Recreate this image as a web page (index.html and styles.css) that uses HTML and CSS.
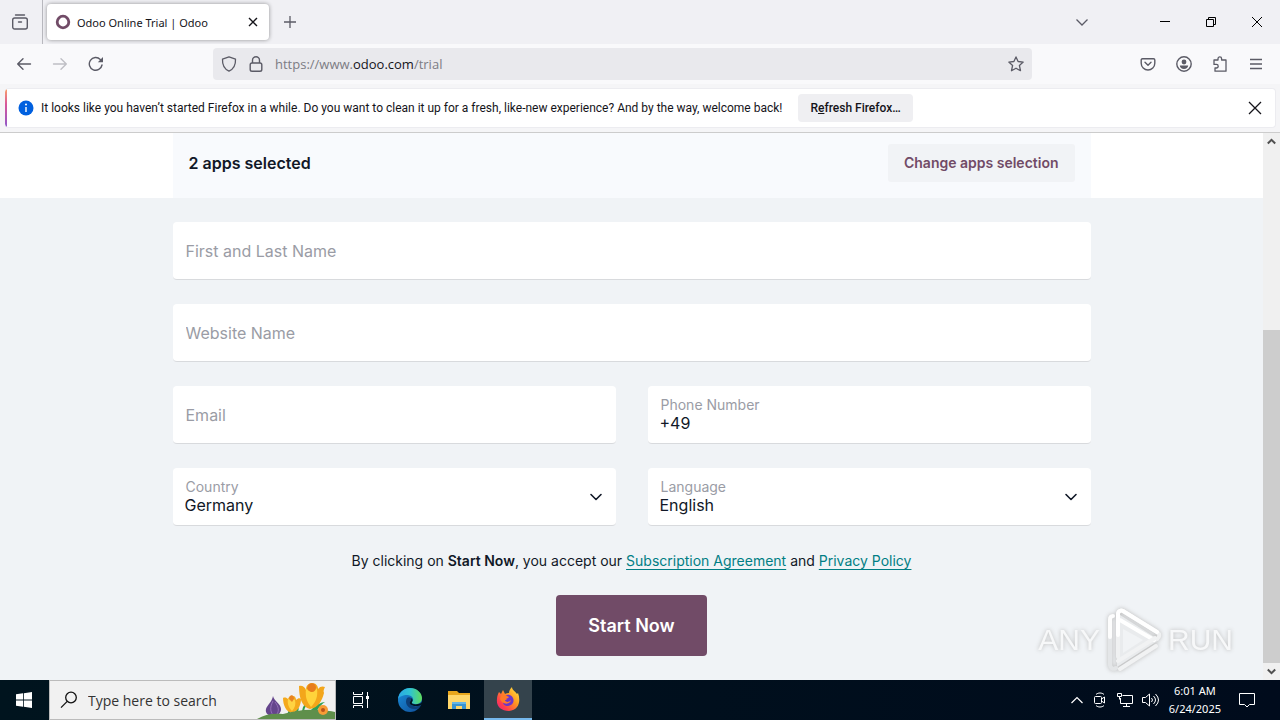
FILE: index.html
```html
<!DOCTYPE html>
<html lang="en">
<head>
  <meta charset="UTF-8">
  <meta name="viewport" content="width=device-width, initial-scale=1.0">
  <title>Odoo Online Trial | Odoo</title>
  <link rel="stylesheet" href="styles.css">
</head>
<body>
  <!-- Tabs -->
  <header class="tabbar">
    <button class="icon-btn tabview" aria-label="Firefox View">
      <svg width="18" height="18" viewBox="0 0 18 18" fill="none" stroke="#5b5b66" stroke-width="1.4" stroke-linecap="round"><path d="M4.500 2h9"/><rect x="1.700" y="5" width="14.600" height="11" rx="2"/><path d="M7.500 9h3"/></svg>
    </button>
    <div class="tab">
      <svg width="16" height="16" viewBox="0 0 16 16"><circle cx="8" cy="8" r="5.8" fill="none" stroke="#714b67" stroke-width="2.800"/></svg>
      <span class="tab-title">Odoo Online Trial | Odoo</span>
      <button class="icon-btn tab-close" aria-label="Close tab">
        <svg width="10" height="10" viewBox="0 0 10 10" stroke="#15141a" stroke-width="1.4"><path d="M1 1l8 8M9 1L1 9"/></svg>
      </button>
    </div>
    <button class="icon-btn new-tab" aria-label="New tab">
      <svg width="14" height="14" viewBox="0 0 14 14" stroke="#5b5b66" stroke-width="1.3"><path d="M7 1v12M1 7h12"/></svg>
    </button>
    <div class="window-btns">
      <button class="icon-btn all-tabs" aria-label="List all tabs"><svg width="14" height="14" viewBox="0 0 14 14" fill="none" stroke="#5b5b66" stroke-width="1.3"><path d="M1.5 4.5L7 10l5.500-5.500"/></svg></button>
      <button class="icon-btn" aria-label="Minimize"><svg width="10" height="10" viewBox="0 0 10 10" stroke="#000"><path d="M0 4.500h10"/></svg></button>
      <button class="icon-btn" aria-label="Restore"><svg width="10" height="10" viewBox="0 0 10 10" fill="none" stroke="#000"><path d="M.5 2.500h7v7h-7zM2.500 2.500v-2h7v7h-2"/></svg></button>
      <button class="icon-btn" aria-label="Close"><svg width="10" height="10" viewBox="0 0 10 10" stroke="#000"><path d="M0 0l10 10M10 0L0 10"/></svg></button>
    </div>
  </header>

  <!-- Toolbar -->
  <nav class="toolbar">
    <div class="nav-btns">
      <button class="icon-btn" aria-label="Back"><svg width="16" height="16" viewBox="0 0 16 16" fill="none" stroke="#5b5b66" stroke-width="1.4" stroke-linecap="round" stroke-linejoin="round"><path d="M14.500 8H1.700M7 2.800L1.700 8 7 13.200"/></svg></button>
      <button class="icon-btn" aria-label="Forward" disabled><svg width="16" height="16" viewBox="0 0 16 16" fill="none" stroke="#bfbfc5" stroke-width="1.4" stroke-linecap="round" stroke-linejoin="round"><path d="M1.500 8h12.800M9 2.800L14.300 8 9 13.200"/></svg></button>
      <button class="icon-btn" aria-label="Reload"><svg width="16" height="16" viewBox="0 0 16 16" fill="none" stroke="#5b5b66" stroke-width="1.4" stroke-linecap="round"><path d="M14 9A6.400 6.400 0 1 1 12.300 3.400"/><path d="M15 1v5.200H9.800z" fill="#5b5b66" stroke="none"/></svg></button>
    </div>
    <div class="urlbar">
      <svg width="16" height="16" viewBox="0 0 16 16" fill="none" stroke="#5b5b66" stroke-width="1.3" stroke-linejoin="round"><path d="M8 .8l6.500 2.300c.3 5.500-1.500 9.700-6.500 12.100C3 12.800 1.200 8.600 1.500 3.100z"/></svg>
      <svg width="16" height="16" viewBox="0 0 16 16" fill="none" stroke="#5b5b66" stroke-width="1.400"><rect x="2.200" y="7" width="11.600" height="8.300" rx="1.800"/><path d="M4.500 7V4.300a3.500 3.500 0 0 1 7 0V7"/></svg>
      <span class="url">https://www.<b>odoo.com</b>/trial</span>
      <button class="icon-btn bookmark" aria-label="Bookmark this page"><svg width="16" height="16" viewBox="0 0 16 16" fill="none" stroke="#5b5b66" stroke-width="1.300" stroke-linejoin="round"><path d="M8 .9l2.100 4.600 5.100.6-3.800 3.400 1.100 5.200L8 12.200l-4.500 2.500 1.100-5.200L.8 6.100l5.100-.6z"/></svg></button>
    </div>
    <div class="tool-btns">
      <button class="icon-btn" aria-label="Save to Pocket"><svg width="16" height="16" viewBox="0 0 16 16" fill="none" stroke="#5b5b66" stroke-width="1.400" stroke-linecap="round" stroke-linejoin="round"><path d="M2.500 2.700h11a1.300 1.300 0 0 1 1.300 1.300v3.200a6.800 6.800 0 0 1-13.600 0V4a1.300 1.300 0 0 1 1.300-1.300z"/><path d="M5 6.300l3 2.900 3-2.900"/></svg></button>
      <button class="icon-btn" aria-label="Account"><svg width="16" height="16" viewBox="0 0 16 16"><circle cx="8" cy="8" r="7.200" fill="none" stroke="#5b5b66" stroke-width="1.400"/><circle cx="8" cy="6" r="2.400" fill="#5b5b66"/><path d="M3.800 9.500h8.400c0 2-1.800 3.400-4.200 3.400s-4.200-1.400-4.200-3.400z" fill="#5b5b66"/></svg></button>
      <button class="icon-btn" aria-label="Extensions"><svg width="16" height="16" viewBox="0 0 16 16" fill="none" stroke="#5b5b66" stroke-width="1.300" stroke-linejoin="round"><path d="M2 4h4V2.700a1.800 1.800 0 0 1 3.600 0V4H14v11.200H3V12h1.400a1.800 1.800 0 0 0 0-3.600H2z"/></svg></button>
      <button class="icon-btn" aria-label="Application menu"><svg width="14" height="14" viewBox="0 0 14 14" stroke="#5b5b66" stroke-width="1.300"><path d="M1 2.500h12M1 7h12M1 11.500h12"/></svg></button>
    </div>
  </nav>

  <!-- Notification -->
  <div class="notice-area">
    <div class="notice">
      <svg class="info" width="16" height="16" viewBox="0 0 16 16"><circle cx="8" cy="8" r="7.500" fill="#0060df"/><path d="M8 7v5" stroke="#fff" stroke-width="1.400"/><circle cx="8" cy="4.500" r="1" fill="#fff"/></svg>
      <span class="notice-text">It looks like you haven’t started Firefox in a while. Do you want to clean it up for a fresh, like-new experience? And by the way, welcome back!</span>
      <button class="refresh">R<u>e</u>fresh Firefox…</button>
      <button class="icon-btn notice-close" aria-label="Dismiss"><svg width="14" height="14" viewBox="0 0 14 14" stroke="#15141a" stroke-width="1.300"><path d="M1 1l12 12M13 1L1 13"/></svg></button>
    </div>
  </div>

  <div class="viewport">
    <main class="page">
      <section class="apps">
        <div class="apps-inner">
          <h1 class="apps-title">2 apps selected</h1>
          <button class="change">Change apps selection</button>
        </div>
      </section>

      <form class="trial-form">
        <input class="field wide" type="text" placeholder="First and Last Name" aria-label="First and Last Name">
        <input class="field wide" type="text" placeholder="Website Name" aria-label="Website Name">
        <input class="field" type="email" placeholder="Email" aria-label="Email">
        <div class="field floating">
          <label for="phone">Phone Number</label>
          <input id="phone" type="tel" value="+49">
        </div>
        <div class="field floating">
          <label for="country">Country</label>
          <select id="country"><option>Germany</option></select>
          <svg class="caret" width="14" height="14" viewBox="0 0 14 14" fill="none" stroke="#111827" stroke-width="1.600" stroke-linecap="round" stroke-linejoin="round"><path d="M2 4.500l5 5 5-5"/></svg>
        </div>
        <div class="field floating">
          <label for="language">Language</label>
          <select id="language"><option>English</option></select>
          <svg class="caret" width="14" height="14" viewBox="0 0 14 14" fill="none" stroke="#111827" stroke-width="1.600" stroke-linecap="round" stroke-linejoin="round"><path d="M2 4.500l5 5 5-5"/></svg>
        </div>
        <p class="terms wide">By clicking on <b>Start Now</b>, you accept our <a href="#">Subscription Agreement</a> and <a href="#">Privacy Policy</a></p>
        <button class="start wide" type="button">Start Now</button>
      </form>

      <div class="watermark">
        <span>ANY</span>
        <svg width="62" height="66" viewBox="0 0 62 66" fill="none" stroke-linejoin="round" stroke-linecap="round">
          <path d="M14 6v54L56 33z" fill="#e9ebed" stroke="none"/>
          <path d="M7 11v46c0 4 3 6 6 4" stroke="#e4e6e8" stroke-width="4"/>
          <path d="M7 30V13c0-3 1-4 3-4" stroke="#fdfdfd" stroke-width="4"/>
          <path d="M15 50V7c0-3 3-4 5-3l34 21c3 2 3 5 0 7" stroke="#f0f1f2" stroke-width="4"/>
          <path d="M15 28V7c0-3 3-4 5-3l34 21M17 13l34 20" stroke="#fff" stroke-width="4"/>
          <path d="M15 54l37-23M17 62l36-23" stroke="#f1f2f3" stroke-width="4"/>
          <path d="M20 22v24l20-13z" fill="#f1f3f5" stroke="none"/>
        </svg>
        <span>RUN</span>
      </div>
    </main>
    <div class="scrollbar">
      <button class="icon-btn" aria-label="Scroll up"><svg width="9" height="9" viewBox="0 0 9 9" fill="none" stroke="#505050" stroke-width="2"><path d="M.8 6.500l3.700-3.700 3.700 3.700"/></svg></button>
      <div class="track"><div class="thumb"></div></div>
      <button class="icon-btn" aria-label="Scroll down"><svg width="9" height="9" viewBox="0 0 9 9" fill="none" stroke="#505050" stroke-width="2"><path d="M.8 2.500l3.700 3.700 3.700-3.700"/></svg></button>
    </div>
  </div>

  <!-- Taskbar -->
  <footer class="taskbar">
    <button class="task" aria-label="Start"><svg width="16" height="16" viewBox="0 0 16 16" fill="#fff"><path d="M0 2.300l7-1v6.300H0zM7.800 1.200L16 0v7.600H7.800zM0 8.400h7v6.300l-7-1zM7.800 8.400H16V16l-8.200-1.200z"/></svg></button>
    <label class="search">
      <svg class="search-icon" width="18" height="18" viewBox="0 0 18 18" fill="none" stroke="#111" stroke-width="1.300"><circle cx="11" cy="6.500" r="5.300"/><path d="M7.200 10.400L1 16.600"/></svg>
      <input type="text" placeholder="Type here to search" aria-label="Type here to search">
      <svg class="flowers" width="78" height="38" viewBox="0 0 78 38">
        <path d="M31 34c2-4 3-8 2-12M46 36c-1-7 1-11 6-17" fill="none" stroke="#2f9b4c" stroke-width="2"/>
        <path d="M16 15c1 5 8 8 8 13 0 4-3 7-8 7s-8-3-7-7c1-4 6-7 7-13z" fill="#65458c"/>
        <path d="M16 20c-3 6-3 10 0 14M18 21c4 5 4 9 2 12" stroke="#9470b8" fill="none"/>
        <path d="M50 36c3-8 10-14 18-15-5 3-8 9-13 15z" fill="#2fa055"/>
        <path d="M36 36c1-5 3-8 6-9-1 3-1 6-3 9z" fill="#2fa055"/>
        <path d="M26 17c2-1 4 0 5 1 1-3 3-4 5-3 2 0 3 2 3 4 2-2 4-2 5-1 0 5-2 12-9 14-6-1-9-8-9-15z" fill="#f4a91c"/>
        <path d="M31 18c-1 5 1 9 4 12 3-3 4-7 3-11-2-2-5-2-7-1z" fill="#ffd342"/>
        <path d="M33 15c2-2 4 0 4 3l-2 3-3-3z" fill="#e88421"/>
        <path d="M42 5c3-1 6 1 7 4 0-5 3-7 6-7 4 0 6 3 6 6 2-3 5-3 7-2-1 2-2 4-1 6-2 8-6 15-14 16-8-2-11-11-11-23z" fill="#f3a61b"/>
        <path d="M49 8c-1 8 1 13 5 18 5-5 7-11 6-18-3-3-8-3-11 0z" fill="#ffd33b"/>
        <path d="M52 3c4-2 7 0 7 4 0 2-2 4-4 4s-5-2-5-4z" fill="#e77c1c"/>
        <path d="M0 38c8-5 16-6 26-5 12-3 22-5 34-4 8 0 14 1 18 2v7z" fill="#5f8f4b"/>
        <circle cx="66" cy="29" r="5" fill="#f79c36"/><circle cx="66" cy="29" r="2" fill="#b9541b"/>
      </svg>
    </label>
    <button class="task" aria-label="Task View"><svg width="18" height="16" viewBox="0 0 18 16" fill="none" stroke="#fff"><path d="M1.500 0v2.500h9V0M1.500 16v-2.500h9V16M1.500 4.500h9v7h-9zM15.500 0v16"/><path d="M14 4h3v3h-3z" fill="#fff" stroke="none"/></svg></button>
    <button class="task" aria-label="Microsoft Edge"><svg width="26" height="26" viewBox="0 0 26 26">
      <defs>
        <linearGradient id="edge-top" x1="0" y1="0" x2="1" y2="0"><stop offset="0" stop-color="#2aa8e6"/><stop offset=".5" stop-color="#2fc3d2"/><stop offset="1" stop-color="#5fdc5c"/></linearGradient>
        <linearGradient id="edge-low" x1="0" y1="0" x2="1" y2="1"><stop offset="0" stop-color="#1a8fdc"/><stop offset="1" stop-color="#0f4c96"/></linearGradient>
      </defs>
      <circle cx="13" cy="13" r="12" fill="url(#edge-low)"/>
      <path d="M1 12C2 5 7 1 13 1c7 0 12 5 12 10 0 4-3 6-6 6-3 0-5-1-4-2 3-3 0-7-5-7-4 0-8 2-9 4z" fill="url(#edge-top)"/>
      <path d="M10 11c-3 5 1 12 9 11 2 0 4-2 5-4-6 3-11 1-10-3 1-2 2-3 0-4-1-1-3-1-4 0z" fill="#0d3f78"/>
      <path d="M14 11c2 1 2 3 1 4-1 2 3 3 6 2 2 0 3-1 4-2v2c-2 2-4 2-6 2-4 0-7-2-6-4 1-1 2-3 1-4z" fill="#00141e"/>
    </svg></button>
    <button class="task" aria-label="File Explorer"><svg width="22" height="18" viewBox="0 0 22 18"><path d="M0 0h9l2 2h11v16H0z" fill="#e8a71d"/><path d="M0 4h22v14H0z" fill="#ffd76a"/><path d="M4 18v-7h14v7h-4v-3H8v3z" fill="#3a94d0"/><path d="M4 11h14v2H4z" fill="#64b5e4"/></svg></button>
    <button class="task active" aria-label="Firefox"><svg width="24" height="24" viewBox="0 0 24 24">
      <defs>
        <linearGradient id="fox" x1="1" y1="0" x2="0" y2="1"><stop offset="0" stop-color="#fff04a"/><stop offset=".4" stop-color="#ff9a20"/><stop offset=".75" stop-color="#ff3d4d"/><stop offset="1" stop-color="#e61d8b"/></linearGradient>
      </defs>
      <path d="M3 5l2 2 2-4 2 4c1-1 3-1 4-1 0-2 1-4 3-6 0 3 3 4 5 7l1-1c3 8 1 17-9 18C5 24 0 19 1 12c0-3 1-5 2-7z" fill="url(#fox)"/>
      <path d="M8 10c2-3 7-3 9 1 2 5-2 8-5 8-4 0-6-3-5-7 1 1 2 1 4 1-1-1-2-2-3-3z" fill="#6b36c9"/>
      <path d="M5 9c2-2 5-1 6 0l2 1c-1 2-3 1-4 3 0 2 4 3 6 0-1 5-9 5-11-1z" fill="#ff7b27"/>
    </svg></button>
    <div class="tray">
      <svg width="12" height="12" viewBox="0 0 12 12" fill="none" stroke="#fff" stroke-width="1.200"><path d="M.5 9L6 3.500 11.500 9"/></svg>
      <svg width="16" height="16" viewBox="0 0 16 16" fill="none" stroke="#fff"><rect x="2.500" y="4.500" width="7" height="7" rx="1"/><path d="M9.500 7l3-2v6l-3-2M4 2.500C6 .5 10 .5 12 2.500M4 13.500c2 2 6 2 8 0"/></svg>
      <svg width="16" height="16" viewBox="0 0 16 16" fill="none" stroke="#fff"><path d="M5.500 3.500h10v8h-12V6M9.500 11.500v3M6 14.500h7M.5 1.500h4v3h-4zM2.500 4.500v3"/></svg>
      <svg width="18" height="16" viewBox="0 0 18 16" fill="none" stroke="#fff"><path d="M.5 5.500h3l4-3.500v12l-4-3.500h-3zM9.500 6q2 2 0 4M11.500 4q4 4 0 8M13.500 2q6 6 0 12"/></svg>
      <time class="clock"><span>6:01 AM</span><span>6/24/2025</span></time>
      <svg class="action" width="16" height="16" viewBox="0 0 16 16" fill="none" stroke="#fff"><path d="M.5 1.500h15v11h-5L8 15l-2.500-2.500h-5z"/></svg>
    </div>
  </footer>
</body>
</html>
```
FILE: styles.css
```css
* { box-sizing: border-box; }
body {
  margin: 0; height: 100vh; overflow: hidden;
  display: flex; flex-direction: column;
  font-family: "Noto Sans", "Open Sans", sans-serif;
  font-size: 11px; color: #15141a;
}
button, input, select { font: inherit; color: inherit; }
svg { flex: none; display: block; }
.icon-btn {
  display: flex; align-items: center; justify-content: center;
  padding: 0; border: 0; background: none;
}

/* tabs */
.tabbar { display: flex; flex: none; height: 44px; background: #f0f0f4; }
.tabview { width: 43px; padding-right: 3px; border-right: 1px solid #b8b8be; }
.tab {
  display: flex; align-items: center; gap: 6px;
  width: 222px; margin: 4px 0 4px 4px; padding: 0 8px;
  background: #fff; border-radius: 4px; box-shadow: 0 0 4px rgba(0,0,0,.4);
}
.tab-title { flex: 1; white-space: nowrap; }
.tab-close { width: 16px; height: 24px; }
.new-tab { width: 42px; }
.window-btns { display: flex; margin-left: auto; }
.window-btns .icon-btn { width: 46px; }
.window-btns .all-tabs { width: 32px; margin-right: 44px; }

/* toolbar */
.toolbar {
  display: flex; align-items: center; flex: none; height: 40px;
  padding: 0 6px; background: #f9f9fb;
}
.nav-btns, .tool-btns { display: flex; flex: none; }
.nav-btns { width: 207px; }
.tool-btns { width: 242px; justify-content: flex-end; }
.nav-btns .icon-btn, .tool-btns .icon-btn { width: 36px; height: 32px; }
.urlbar {
  display: flex; align-items: center; gap: 11px;
  flex: 1; height: 32px; padding: 0 8px;
  background: #e9e9ed; border-radius: 4px;
}
.url { flex: 1; font-family: "Open Sans", sans-serif; font-size: 13px; color: #7c7c84; }
.url b { font-weight: 400; color: #15141a; }

/* notification */
.notice-area { flex: none; padding: 4px 4px 4px 5px; background: #f5f5f7; border-bottom: 1px solid #ccc; }
.notice {
  display: flex; align-items: center; height: 40px; padding: 0 12px 0 11px;
  border: 1px solid #ececf0; border-left: 0; border-radius: 4px;
  background: linear-gradient(#f9a06a, #d8569a 40%, #9059c9) left / 2px 100% no-repeat #fff;
  font-family: Roboto, sans-serif; font-size: 12px;
}
.info { margin: 0 7px 0 2px; }
.notice-text { white-space: nowrap; }
.refresh {
  height: 28px; margin-left: 16px; padding: 0 12px;
  border: 0; border-radius: 4px; background: #efeff2; font-weight: 500;
}
.notice-close { width: 16px; height: 16px; margin-left: auto; }

/* page */
.viewport { display: flex; flex: 1; min-height: 0; }
.page {
  position: relative; flex: 1; overflow: hidden;
  background: #f0f3f6; font-family: Inter, sans-serif; color: #111827;
}
.apps { background: #fff; }
.apps-inner, .trial-form { max-width: 918px; margin: 0 auto; }
.apps-inner {
  display: flex; align-items: center; justify-content: space-between;
  height: 65px; padding: 0 16px 6px; background: #f8fafd;
}
.apps-title { margin: 0; font-size: 16px; font-weight: 600; }
.change {
  height: 38px; padding: 0 16px; border: 0; border-radius: 3px;
  background: #f1f3f6; color: #714b67; font-size: 14px; font-weight: 600;
}
.trial-form { display: grid; grid-template-columns: 1fr 1fr; gap: 24px 32px; padding-top: 24px; }
.wide { grid-column: 1 / -1; }
.field {
  width: 100%; height: 58px; padding: 0 13px;
  border: 0; border-bottom: 1px solid #d8dadd; border-radius: 4px;
  background: #fff; font-size: 16px;
}
.field::placeholder { color: #9a9ca5; opacity: 1; }
.floating { position: relative; padding: 10px 12px; }
.floating label { display: block; padding-left: 1px; font-size: 14px; line-height: 17px; color: #9a9ca5; }
.floating input, .floating select {
  display: block; width: 100%; height: 20px; padding: 0; border: 0;
  background: none; appearance: none; line-height: 20px;
}
.caret { position: absolute; top: 22px; right: 13px; pointer-events: none; }
.terms { margin: 0; text-align: center; font-size: 14px; line-height: 21px; }
.terms b { font-weight: 600; }
.terms a { color: #017e84; text-underline-offset: 3px; }
.start {
  justify-self: center; height: 61px; padding: 0 32px;
  border: 0; border-radius: 4px; background: #714b67;
  color: #fff; font-size: 18px; font-weight: 600;
}
.watermark {
  position: absolute; right: 30px; bottom: 7px;
  display: flex; align-items: center; gap: 3px;
  font-family: "Liberation Sans", sans-serif;
  font-size: 30px; color: #f7f8f9; filter: drop-shadow(0 0 2px #bbb);
  pointer-events: none;
}
.scrollbar { display: flex; flex-direction: column; flex: none; width: 17px; background: #f0f0f0; }
.scrollbar .icon-btn { height: 17px; }
.track { display: flex; align-items: flex-end; flex: 1; }
.thumb { width: 100%; height: 65%; background: #cdcdcd; }

/* taskbar */
.taskbar {
  display: flex; flex: none; gap: 1px; height: 40px;
  background: linear-gradient(90deg, #00141e, #000b1c); color: #fff;
}
.task {
  display: flex; align-items: center; justify-content: center;
  width: 48px; padding: 0; border: 0; background: none;
}
.active { background: #34434c; border-bottom: 2px solid #76b9ed; }
.search {
  display: flex; align-items: center; width: 287px; padding-left: 10px;
  background: #f1f1f1; border: 1px solid #bbb; color: #333;
}
.search input {
  flex: 1; min-width: 0; padding: 0 0 0 10px; border: 0; background: none;
  font-family: "Open Sans", sans-serif; font-size: 14px;
}
.search input::placeholder { color: #333; opacity: 1; }
.flowers { align-self: flex-end; }
.tray { display: flex; align-items: center; gap: 9px; margin-left: auto; padding-right: 25px; }
.clock { display: flex; flex-direction: column; align-items: center; line-height: 18px; }
.action { margin-left: 9px; }
```
